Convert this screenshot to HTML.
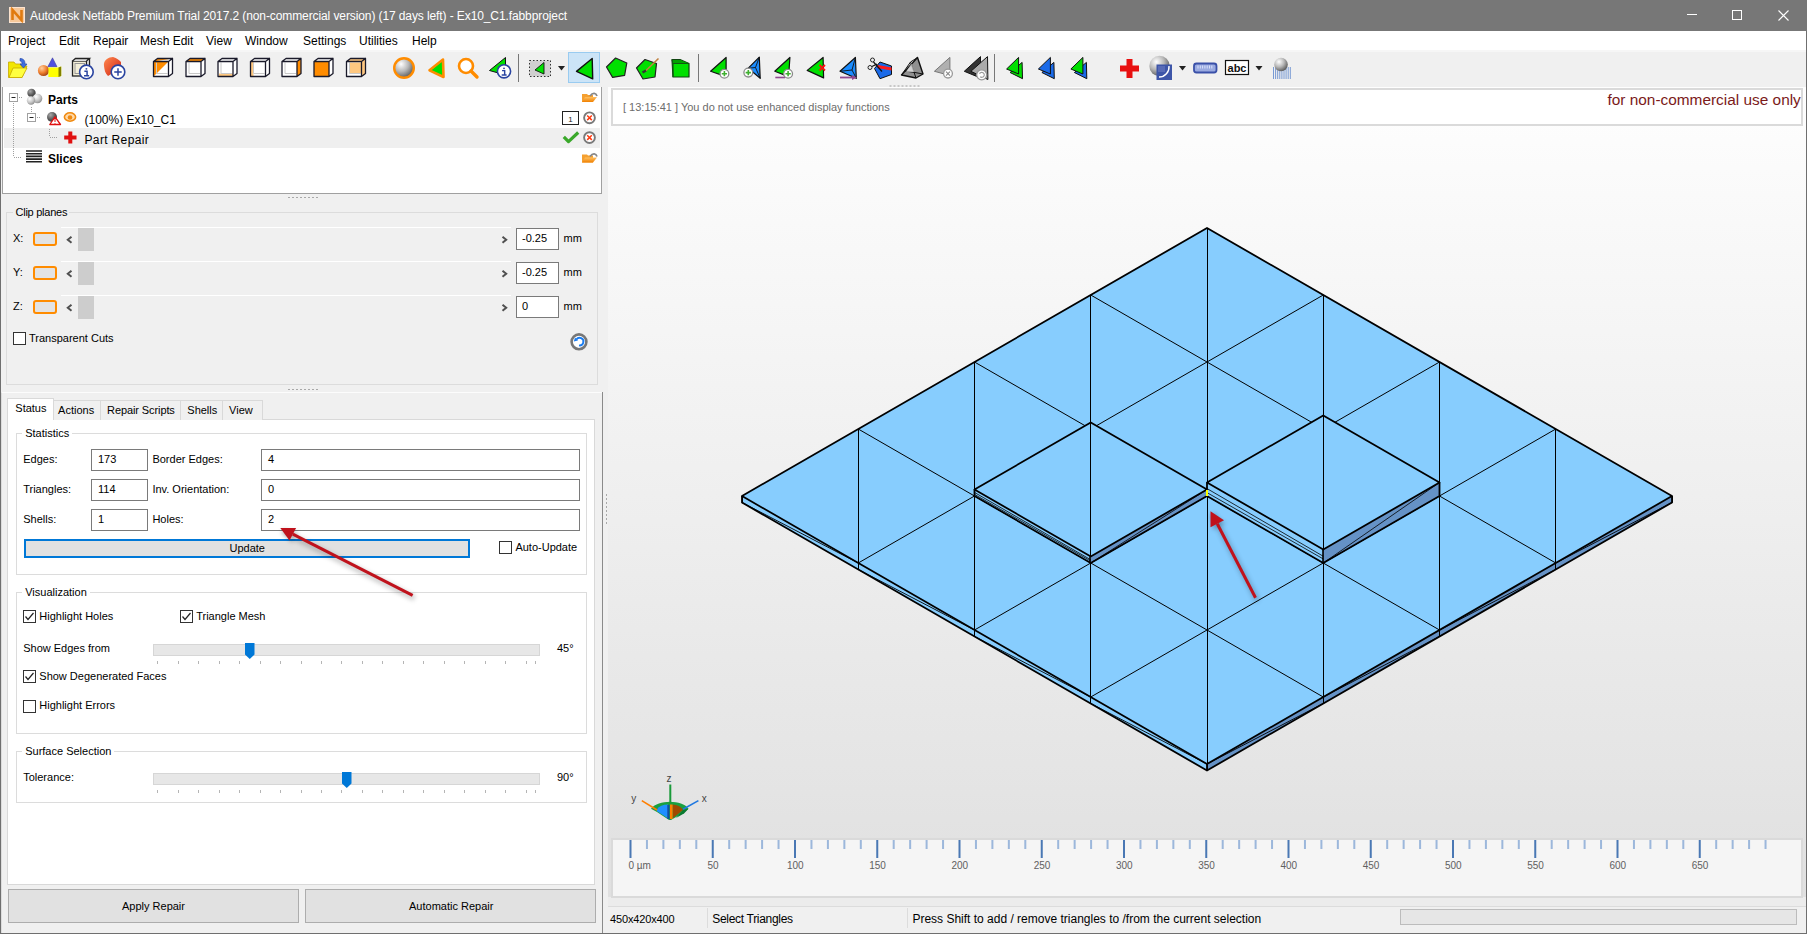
<!DOCTYPE html><html><head><meta charset="utf-8"><style>
html,body{margin:0;padding:0;}
body{width:1807px;height:934px;overflow:hidden;position:relative;background:#f0f0f0;font-family:"Liberation Sans",sans-serif;}
.t{position:absolute;white-space:pre;line-height:1;}
.b{position:absolute;box-sizing:border-box;}
svg{position:absolute;overflow:visible;}
</style></head><body>
<div class="b" style="left:0px;top:0px;width:1807px;height:31px;background:#777777;"></div>
<svg style="left:9px;top:7px" width="16" height="16"><rect x="0" y="0" width="16" height="16" fill="#fbe3cf"/><rect x="1" y="1" width="14" height="14" fill="#f6c89a"/><path d="M3.5 13 V3 L12.5 13 V3" fill="none" stroke="#e07b10" stroke-width="2.6"/></svg>
<div class="t" style="left:30px;top:10.00px;font-size:12px;color:#ffffff;font-weight:400;letter-spacing:-0.1px;">Autodesk Netfabb Premium Trial 2017.2 (non-commercial version) (17 days left) - Ex10_C1.fabbproject</div>
<div class="b" style="left:1687px;top:14px;width:10px;height:1px;background:#fff;"></div>
<div class="b" style="left:1732px;top:10px;width:10px;height:10px;border:1px solid #fff;"></div>
<svg style="left:1778px;top:10px" width="11" height="11"><path d="M0.5 0.5 L10.5 10.5 M10.5 0.5 L0.5 10.5" stroke="#fff" stroke-width="1.1"/></svg>
<div class="b" style="left:1px;top:31px;width:1805px;height:19px;background:#ffffff;"></div>
<div class="b" style="left:1px;top:50px;width:1805px;height:2px;background:#f6f6f6;"></div>
<div class="t" style="left:8px;top:35.00px;font-size:12px;color:#000;font-weight:400;">Project</div>
<div class="t" style="left:59px;top:35.00px;font-size:12px;color:#000;font-weight:400;">Edit</div>
<div class="t" style="left:93px;top:35.00px;font-size:12px;color:#000;font-weight:400;">Repair</div>
<div class="t" style="left:140px;top:35.00px;font-size:12px;color:#000;font-weight:400;">Mesh Edit</div>
<div class="t" style="left:206px;top:35.00px;font-size:12px;color:#000;font-weight:400;">View</div>
<div class="t" style="left:245px;top:35.00px;font-size:12px;color:#000;font-weight:400;">Window</div>
<div class="t" style="left:303px;top:35.00px;font-size:12px;color:#000;font-weight:400;">Settings</div>
<div class="t" style="left:359px;top:35.00px;font-size:12px;color:#000;font-weight:400;">Utilities</div>
<div class="t" style="left:412px;top:35.00px;font-size:12px;color:#000;font-weight:400;">Help</div>
<div class="b" style="left:1px;top:52px;width:1805px;height:35px;background:#f0f0f0;"></div>
<div class="b" style="left:0px;top:31px;width:1px;height:903px;background:#6f6f6f;"></div>
<div class="b" style="left:1806px;top:31px;width:1px;height:903px;background:#6f6f6f;"></div>
<div class="b" style="left:0px;top:933px;width:1807px;height:1px;background:#6f6f6f;"></div>
<svg style="left:0;top:0" width="1807" height="90" viewBox="0 0 1807 90"><defs>
<radialGradient id="gs" cx="0.35" cy="0.3" r="0.75"><stop offset="0" stop-color="#ffffff"/><stop offset="0.5" stop-color="#b8b8b8"/><stop offset="1" stop-color="#555"/></radialGradient>
<radialGradient id="go" cx="0.35" cy="0.3" r="0.75"><stop offset="0" stop-color="#ffd0a0"/><stop offset="0.55" stop-color="#f08030"/><stop offset="1" stop-color="#a04010"/></radialGradient>
<linearGradient id="gr" x1="0" y1="0" x2="1" y2="1"><stop offset="0" stop-color="#ff8a50"/><stop offset="1" stop-color="#d02010"/></linearGradient>
</defs><path d="M8.5 62 L14 62 L15.5 64 L21 64 L21 66 L27 66 L22 77.5 L8.5 77.5 Z" fill="#f2e600" stroke="#c8a800" stroke-width="0.8"/><path d="M9 77.5 L13 68 L27 68 L22 77.5 Z" fill="#ffff40" stroke="#c8a800" stroke-width="0.8"/><path d="M20 58.5 C24 58.5 25 61 25 64 L27 64 L23.5 68 L20 64 L22 64 C22 62 21.5 61 20 61 Z" fill="#3d6ee0" stroke="#2040a0" stroke-width="0.6"/><polygon points="52.5,57.8 47.8,66.7 57,66.7" fill="#5050e0" stroke="#303090" stroke-width="0.5"/><circle cx="43.5" cy="70.5" r="5.6" fill="url(#go)"/><polygon points="48.4,67.5 58.5,67.5 61.2,66.5 61.2,76 58.5,77.1 48.4,77.1" fill="#ffff00"/><polygon points="58.5,67.5 61.2,66.5 61.2,76 58.5,77.1" fill="#808000"/><rect x="72.5" y="61" width="14" height="15" fill="#f4efd8" stroke="#222" stroke-width="1.3"/><path d="M72.5 61 L75.5 58.5 L89.5 58.5 L86.5 61 M89.5 58.5 L89.5 73 L86.5 76" fill="#e0e0e0" stroke="#222" stroke-width="1.3"/><rect x="75" y="63.5" width="9.5" height="10" fill="none" stroke="#999" stroke-width="1"/><circle cx="86.4" cy="71.9" r="6.8" fill="#fff" stroke="#2a44a0" stroke-width="1.6"/><circle cx="86.4" cy="68.84" r="0.9520000000000001" fill="#2a44a0"/><path d="M84.36 71.22 H87.08000000000001 V75.30000000000001 M84.02000000000001 75.64 H89.12" stroke="#2a44a0" stroke-width="1.496" fill="none"/><path d="M104 66 C103 60 109 57 113 57 C117 58 119 60 121 62 L121 72 C116 70 111 74 108 76 C105 73 104.5 70 104 66 Z" fill="url(#gr)"/><circle cx="118" cy="71.9" r="6.8" fill="#fff" stroke="#2a44a0" stroke-width="1.6"/><path d="M114.26 71.9 H121.74 M118 68.16000000000001 V75.64" stroke="#2a44a0" stroke-width="1.496" fill="none"/><path d="M168.5 61.5 L172.5 58.5 L172.5 73.5 L168.5 76.5 Z" fill="#fff"/><path d="M153.5 61.5 L157.5 58.5 L172.5 58.5 L168.5 61.5 Z" fill="#fff"/><path d="M153.5 61.5 H168.5 V76.5 H153.5 Z" fill="#fff"/><path d="M153.5 61.5 L168.5 61.5 L153.5 76.5 Z" fill="#ff8c00"/><path d="M153.5 61.5 L157.5 58.5 L172.5 58.5 Z" fill="#ff8c00"/><path d="M156.5 73.5 H167.5 M156.5 62.5 V73.5" stroke="#c8c8c8" stroke-width="1" fill="none"/><path d="M153.5 61.5 H168.5 V76.5 H153.5 Z M153.5 61.5 L157.5 58.5 L172.5 58.5 L168.5 61.5 Z M168.5 61.5 L172.5 58.5 L172.5 73.5 L168.5 76.5 Z" fill="none" stroke="#1a1a2a" stroke-width="1.3" stroke-linejoin="round"/><path d="M201 61.5 L205 58.5 L205 73.5 L201 76.5 Z" fill="#fff"/><path d="M186 61.5 L190 58.5 L205 58.5 L201 61.5 Z" fill="#ff8c00"/><path d="M186 61.5 H201 V76.5 H186 Z" fill="#fff"/><path d="M189 73.5 H200 M189 62.5 V73.5" stroke="#c8c8c8" stroke-width="1" fill="none"/><path d="M186 61.5 H201 V76.5 H186 Z M186 61.5 L190 58.5 L205 58.5 L201 61.5 Z M201 61.5 L205 58.5 L205 73.5 L201 76.5 Z" fill="none" stroke="#1a1a2a" stroke-width="1.3" stroke-linejoin="round"/><path d="M233 61.5 L237 58.5 L237 73.5 L233 76.5 Z" fill="#fff"/><path d="M218 61.5 L222 58.5 L237 58.5 L233 61.5 Z" fill="#fff"/><path d="M218 61.5 H233 V76.5 H218 Z" fill="#fff"/><rect x="219" y="73.5" width="14" height="3" fill="#ffc880"/><path d="M221 73.5 H232 M221 62.5 V73.5" stroke="#c8c8c8" stroke-width="1" fill="none"/><path d="M218 61.5 H233 V76.5 H218 Z M218 61.5 L222 58.5 L237 58.5 L233 61.5 Z M233 61.5 L237 58.5 L237 73.5 L233 76.5 Z" fill="none" stroke="#1a1a2a" stroke-width="1.3" stroke-linejoin="round"/><path d="M265.5 61.5 L269.5 58.5 L269.5 73.5 L265.5 76.5 Z" fill="#fff"/><path d="M250.5 61.5 L254.5 58.5 L269.5 58.5 L265.5 61.5 Z" fill="#fff"/><path d="M250.5 61.5 H265.5 V76.5 H250.5 Z" fill="#fff"/><rect x="250.5" y="61.5" width="3" height="15" fill="#ffc880"/><path d="M253.5 73.5 H264.5 M253.5 62.5 V73.5" stroke="#c8c8c8" stroke-width="1" fill="none"/><path d="M250.5 61.5 H265.5 V76.5 H250.5 Z M250.5 61.5 L254.5 58.5 L269.5 58.5 L265.5 61.5 Z M265.5 61.5 L269.5 58.5 L269.5 73.5 L265.5 76.5 Z" fill="none" stroke="#1a1a2a" stroke-width="1.3" stroke-linejoin="round"/><path d="M297 61.5 L301 58.5 L301 73.5 L297 76.5 Z" fill="#ff8c00"/><path d="M282 61.5 L286 58.5 L301 58.5 L297 61.5 Z" fill="#fff"/><path d="M282 61.5 H297 V76.5 H282 Z" fill="#fff"/><path d="M285 73.5 H296 M285 62.5 V73.5" stroke="#c8c8c8" stroke-width="1" fill="none"/><path d="M282 61.5 H297 V76.5 H282 Z M282 61.5 L286 58.5 L301 58.5 L297 61.5 Z M297 61.5 L301 58.5 L301 73.5 L297 76.5 Z" fill="none" stroke="#1a1a2a" stroke-width="1.3" stroke-linejoin="round"/><path d="M329 61.5 L333 58.5 L333 73.5 L329 76.5 Z" fill="#fff"/><path d="M314 61.5 L318 58.5 L333 58.5 L329 61.5 Z" fill="#fff"/><path d="M314 61.5 H329 V76.5 H314 Z" fill="#ff8c00"/><path d="M314 61.5 H329 V76.5 H314 Z M314 61.5 L318 58.5 L333 58.5 L329 61.5 Z M329 61.5 L333 58.5 L333 73.5 L329 76.5 Z" fill="none" stroke="#1a1a2a" stroke-width="1.3" stroke-linejoin="round"/><path d="M361.5 61.5 L365.5 58.5 L365.5 73.5 L361.5 76.5 Z" fill="#ffc880"/><path d="M346.5 61.5 L350.5 58.5 L365.5 58.5 L361.5 61.5 Z" fill="#ffc880"/><path d="M346.5 61.5 H361.5 V76.5 H346.5 Z" fill="#fff"/><rect x="349.5" y="62.5" width="12" height="11" fill="#ffc880"/><path d="M349.5 73.5 H360.5 M349.5 62.5 V73.5" stroke="#c8c8c8" stroke-width="1" fill="none"/><path d="M346.5 61.5 H361.5 V76.5 H346.5 Z M346.5 61.5 L350.5 58.5 L365.5 58.5 L361.5 61.5 Z M361.5 61.5 L365.5 58.5 L365.5 73.5 L361.5 76.5 Z" fill="none" stroke="#1a1a2a" stroke-width="1.3" stroke-linejoin="round"/><circle cx="404" cy="68" r="9.8" fill="url(#gs)" stroke="#ff8c00" stroke-width="2.4"/><polygon points="443,59.5 429.5,70.3 443.5,77" fill="#00e000" stroke="#ff8c00" stroke-width="2.6" stroke-linejoin="round"/><circle cx="466" cy="66" r="7" fill="#fff" stroke="#ff8c00" stroke-width="2.6"/><path d="M471 71 L477 77" stroke="#ff8c00" stroke-width="3.4" stroke-linecap="round"/><polygon points="505.5,57.5 489.5,70.5 505.5,75" fill="#00e000" stroke="#111" stroke-width="1"/><circle cx="504" cy="71.3" r="6.6" fill="#fff" stroke="#2a44a0" stroke-width="1.6"/><circle cx="504" cy="68.33" r="0.924" fill="#2a44a0"/><path d="M502.02 70.64 H504.66 V74.6 M501.69 74.92999999999999 H506.64" stroke="#2a44a0" stroke-width="1.452" fill="none"/><rect x="518.0" y="54" width="1" height="28" fill="#777"/><rect x="698.0" y="54" width="1" height="28" fill="#777"/><rect x="994.0" y="54" width="1" height="28" fill="#777"/><rect x="529.5" y="60.5" width="21" height="16" fill="#d0d0d0" stroke="#333" stroke-width="1" stroke-dasharray="1.5,2"/><polygon points="535,70 544,62.5 544,74" fill="#00e000" stroke="#111" stroke-width="0.9"/><polygon points="558,66 565,66 561.5,70.5" fill="#222"/><rect x="568.5" y="52.5" width="31" height="30" fill="#cce4f7" stroke="#99cbf0" stroke-width="1"/><polygon points="576.5,71.4 592.2,58.5 592.7,78.9" fill="#00e000" stroke="#111" stroke-width="1.4" stroke-linejoin="round"/><polygon points="615.6,58 626.8,63 624.6,75.4 612.6,77.4 606.5,67" fill="#00e000" stroke="#222" stroke-width="1.2" stroke-linejoin="round"/><polygon points="645,59.5 656.5,63.5 655,77 643,79 636.5,68" fill="#00e000" stroke="#222" stroke-width="1.2" stroke-linejoin="round"/><path d="M658.5 58.5 L645.5 71" stroke="#c08040" stroke-width="1.6"/><path d="M646 70.5 L642.5 72.5" stroke="#333" stroke-width="2.4"/><path d="M672 59.5 L680 59.5 L689 63.5 L689 77 L673 77 Z" fill="#00e000" stroke="#114411" stroke-width="1.2" stroke-linejoin="round"/><path d="M672 59.5 L673 63.5 L689 63.5 M673 63.5 L673 77" fill="none" stroke="#115511" stroke-width="1.2"/><path d="M673 60 L680 60 L688 63 L673 63 Z" fill="#00a000"/><polygon points="710.6,71.3 726.1,57.5 726.1,76.6" fill="#00e000" stroke="#111" stroke-width="1.2" stroke-linejoin="round"/><circle cx="724.4" cy="73.7" r="4.4" fill="#fff" stroke="#8a8a8a" stroke-width="1.3"/><path d="M721.76 73.7 H727.04 M724.4 71.06 V76.34" stroke="#40b030" stroke-width="1.6"/><polygon points="748.3,68.2 759.3,57.1 760.2,78.3" fill="#1a8cff" stroke="#111" stroke-width="1.2" stroke-linejoin="round"/><path d="M755.5 67.5 L759.3 57.1 M755.5 67.5 L760.2 78.3 M755.5 67.5 L748.3 68.2" stroke="#111" stroke-width="0.9"/><circle cx="748.3" cy="72.6" r="4.4" fill="#fff" stroke="#8a8a8a" stroke-width="1.3"/><path d="M745.66 72.6 H750.9399999999999 M748.3 69.96 V75.24" stroke="#40b030" stroke-width="1.6"/><polygon points="774.8,71.3 789.9,57.5 788.6,76.6" fill="#00e000" stroke="#111" stroke-width="1.2" stroke-linejoin="round"/><path d="M775.3 77.5 H785" stroke="#904890" stroke-width="1.6"/><circle cx="788.1" cy="73.7" r="4.4" fill="#fff" stroke="#8a8a8a" stroke-width="1.3"/><path d="M785.46 73.7 H790.74 M788.1 71.06 V76.34" stroke="#40b030" stroke-width="1.6"/><polygon points="807.2,70.4 823.1,57.5 823.6,77.9" fill="#00e000" stroke="#111" stroke-width="1.2" stroke-linejoin="round"/><path d="M819.5 65 L825 70.5 M825 65 L819.5 70.5" stroke="#ff1010" stroke-width="1.8"/><polygon points="840,71.3 855.4,57.5 856.3,78.3" fill="#1a8cff" stroke="#111" stroke-width="1.2" stroke-linejoin="round"/><path d="M852 70 L855.4 57.5 M852 70 L856.3 78.3 M852 70 L840 71.3" stroke="#111" stroke-width="0.9"/><path d="M840 77.5 H853" stroke="#904890" stroke-width="1.8"/><polygon points="852,75 857,77.5 852,80" fill="#904890"/><polygon points="880,62 891.5,66 891.5,74.5 880,78.7 874.5,68.5" fill="#1a6ae8" stroke="#111" stroke-width="1"/><polygon points="878,65 891.5,67.5 891.5,70.5 877,68" fill="#ff1a1a"/><circle cx="872.5" cy="60" r="2" fill="none" stroke="#111" stroke-width="0.9"/><circle cx="870" cy="67.5" r="2" fill="none" stroke="#111" stroke-width="0.9"/><path d="M873.5 62 L882 71.5 M872 66.5 L877 64" stroke="#111" stroke-width="1.2"/><polygon points="917.5,57.5 901.5,75 916,78 923,74" fill="#909090" stroke="#111" stroke-width="1.4" stroke-linejoin="round"/><path d="M917.5 57.5 L910.5 62 L901.5 75 M910.5 62 L916 78 M905 71 L915 72.5 L923 74" fill="none" stroke="#111" stroke-width="1"/><polygon points="911.5,63.5 914.5,72 906,72" fill="#fff" opacity="0.6"/><polygon points="934.4,71.3 949.9,57.4 949.9,75.5" fill="#b0b0b0" stroke="#777" stroke-width="1"/><circle cx="948" cy="73.6" r="4.4" fill="#fff" stroke="#999" stroke-width="1.3"/><path d="M946.02 71.61999999999999 L949.98 75.58 M949.98 71.61999999999999 L946.02 75.58" stroke="#888" stroke-width="1.1"/><polygon points="964.3,71.3 980.5,56.6 980.5,78" fill="#333" stroke="#111" stroke-width="1"/><polygon points="970.9,71.3 987.5,56.6 987.9,79.5" fill="#aaa" stroke="#111" stroke-width="1"/><circle cx="981.7" cy="74.8" r="5" fill="#fff" stroke="#999" stroke-width="1.3"/><path d="M979.5 73.8 A2.5 2.5 0 1 1 980.2 76.8" stroke="#999" stroke-width="1.1" fill="none"/><polygon points="1010.1,72.5 1022.1,62.4 1022.5,78.7" fill="#00e000" stroke="#111" stroke-width="1" stroke-linejoin="round"/><polygon points="1006.6,69 1018.6,57.4 1018.6,74" fill="#00e000" stroke="#111" stroke-width="1" stroke-linejoin="round"/><polygon points="1041.9,72.5 1053.9,62.4 1054.3000000000002,78.7" fill="#1a6ae8" stroke="#111" stroke-width="1" stroke-linejoin="round"/><polygon points="1038.4,69 1050.4,57.4 1050.4,74" fill="#1a6ae8" stroke="#111" stroke-width="1" stroke-linejoin="round"/><polygon points="1074.4,72.5 1086.4,62.4 1086.8000000000002,78.7" fill="#1a6ae8" stroke="#111" stroke-width="1" stroke-linejoin="round"/><polygon points="1070.9,69 1082.9,57.4 1082.9,74" fill="#00e000" stroke="#111" stroke-width="1" stroke-linejoin="round"/><path d="M1126.5 59 H1132.5 V65.5 H1139 V71.5 H1132.5 V78 H1126.5 V71.5 H1120 V65.5 H1126.5 Z" fill="#e81010"/><circle cx="1159.5" cy="66" r="10.2" fill="url(#gs)"/><rect x="1156.5" y="64.5" width="15.5" height="15.5" fill="#3d55a8"/><path d="M1169 66 A10 10 0 0 1 1159 77" stroke="#fff" stroke-width="1.4" fill="none"/><rect x="1158" y="66" width="7" height="6" fill="#6a7ac0" opacity="0.6"/><polygon points="1179,66 1186,66 1182.5,70.5" fill="#222"/><rect x="1194" y="63.5" width="22.5" height="9" rx="2.5" fill="#9aaae0" stroke="#3a50a8" stroke-width="1.8"/><path d="M1198.0 65.5 V68.5 M1200.3 65.5 V68.5 M1202.6 65.5 V68.5 M1204.9 65.5 V68.5 M1207.2 65.5 V68.5 M1209.5 65.5 V68.5 M1211.8 65.5 V68.5 " stroke="#e0e8ff" stroke-width="0.9"/><rect x="1225.5" y="60.5" width="23" height="14" fill="#fff" stroke="#111" stroke-width="1.2"/><text x="1237" y="72" text-anchor="middle" font-family="Liberation Sans" font-weight="700" font-size="11" fill="#111">abc</text><polygon points="1255.5,66 1262.5,66 1259.0,70.5" fill="#222"/><path d="M1273.5 67 V79 M1275.6 67 V79 M1277.7 67 V79 M1279.8 67 V79 M1281.9 67 V79 M1284.0 67 V79 M1286.1 67 V79 M1288.2 67 V79 M1290.3 67 V79 " stroke="#6a90d0" stroke-width="0.9"/><circle cx="1281" cy="64.5" r="6.8" fill="url(#gs)"/><path d="M889.5 86 h2 M893.5 86 h2 M897.5 86 h2 M901.5 86 h2 M905.5 86 h2 M909.5 86 h2 M913.5 86 h2 M917.5 86 h2 " stroke="#a0a0a0" stroke-width="1"/></svg>
<div class="b" style="left:1px;top:87px;width:606px;height:846px;background:#f0f0f0;"></div>
<div class="b" style="left:2px;top:87px;width:600px;height:107px;background:#fff;border:1px solid #a0a0a0;border-top:none;"></div>
<div class="b" style="left:4px;top:128px;width:596px;height:20px;background:#efefef;"></div>
<div class="t" style="left:48px;top:94.00px;font-size:12px;color:#000;font-weight:700;">Parts</div>
<div class="t" style="left:84.5px;top:114.00px;font-size:12px;color:#000;font-weight:400;">(100%) Ex10_C1</div>
<div class="t" style="left:84.5px;top:134.00px;font-size:12px;color:#000;font-weight:400;letter-spacing:0.35px;">Part Repair</div>
<div class="t" style="left:48px;top:153.00px;font-size:12px;color:#000;font-weight:700;">Slices</div>
<div class="b" style="left:6px;top:212px;width:592px;height:173px;border:1px solid #dcdcdc;"></div>
<div class="b" style="left:13px;top:205px;width:56px;height:12px;background:#f0f0f0;"></div>
<div class="t" style="left:15.5px;top:207.00px;font-size:11px;color:#000;font-weight:400;letter-spacing:-0.25px;">Clip planes</div>
<div class="t" style="left:13px;top:233.00px;font-size:11px;color:#000;font-weight:400;">X:</div>
<div class="b" style="left:33px;top:232px;width:24px;height:14px;border:2px solid #ff8c00;border-radius:3px;background:#e3e3e3;"></div>
<div class="b" style="left:61px;top:227px;width:450px;height:1px;background:#ffffff;"></div>
<div class="b" style="left:78px;top:228px;width:16px;height:23px;background:#cdcdcd;"></div>
<svg style="left:66px;top:236px" width="7" height="8"><path d="M5.5 0.8 L1.8 3.8 L5.5 6.8" fill="none" stroke="#505050" stroke-width="2"/></svg>
<svg style="left:501px;top:236px" width="7" height="8"><path d="M1.5 0.8 L5.2 3.8 L1.5 6.8" fill="none" stroke="#505050" stroke-width="2"/></svg>
<div class="b" style="left:516px;top:228px;width:43px;height:22px;background:#fff;border:1px solid #7a7a7a;"></div>
<div class="t" style="left:522px;top:233.00px;font-size:11px;color:#000;font-weight:400;">-0.25</div>
<div class="t" style="left:563.5px;top:233.00px;font-size:11px;color:#000;font-weight:400;">mm</div>
<div class="t" style="left:13px;top:267.00px;font-size:11px;color:#000;font-weight:400;">Y:</div>
<div class="b" style="left:33px;top:266px;width:24px;height:14px;border:2px solid #ff8c00;border-radius:3px;background:#e3e3e3;"></div>
<div class="b" style="left:61px;top:261px;width:450px;height:1px;background:#ffffff;"></div>
<div class="b" style="left:78px;top:262px;width:16px;height:23px;background:#cdcdcd;"></div>
<svg style="left:66px;top:270px" width="7" height="8"><path d="M5.5 0.8 L1.8 3.8 L5.5 6.8" fill="none" stroke="#505050" stroke-width="2"/></svg>
<svg style="left:501px;top:270px" width="7" height="8"><path d="M1.5 0.8 L5.2 3.8 L1.5 6.8" fill="none" stroke="#505050" stroke-width="2"/></svg>
<div class="b" style="left:516px;top:262px;width:43px;height:22px;background:#fff;border:1px solid #7a7a7a;"></div>
<div class="t" style="left:522px;top:267.00px;font-size:11px;color:#000;font-weight:400;">-0.25</div>
<div class="t" style="left:563.5px;top:267.00px;font-size:11px;color:#000;font-weight:400;">mm</div>
<div class="t" style="left:13px;top:301.00px;font-size:11px;color:#000;font-weight:400;">Z:</div>
<div class="b" style="left:33px;top:300px;width:24px;height:14px;border:2px solid #ff8c00;border-radius:3px;background:#e3e3e3;"></div>
<div class="b" style="left:61px;top:295px;width:450px;height:1px;background:#ffffff;"></div>
<div class="b" style="left:78px;top:296px;width:16px;height:23px;background:#cdcdcd;"></div>
<svg style="left:66px;top:304px" width="7" height="8"><path d="M5.5 0.8 L1.8 3.8 L5.5 6.8" fill="none" stroke="#505050" stroke-width="2"/></svg>
<svg style="left:501px;top:304px" width="7" height="8"><path d="M1.5 0.8 L5.2 3.8 L1.5 6.8" fill="none" stroke="#505050" stroke-width="2"/></svg>
<div class="b" style="left:516px;top:296px;width:43px;height:22px;background:#fff;border:1px solid #7a7a7a;"></div>
<div class="t" style="left:522px;top:301.00px;font-size:11px;color:#000;font-weight:400;">0</div>
<div class="t" style="left:563.5px;top:301.00px;font-size:11px;color:#000;font-weight:400;">mm</div>
<div class="b" style="left:13px;top:332px;width:13px;height:13px;background:#fff;border:1px solid #333;"></div>
<div class="t" style="left:29px;top:333.00px;font-size:11px;color:#000;font-weight:400;">Transparent Cuts</div>
<svg style="left:570px;top:333px" width="18" height="18"><circle cx="9" cy="8.8" r="7.4" fill="#fff" stroke="#777" stroke-width="2.6"/><path d="M6.4 6.6 A3.8 3.8 0 1 1 9 12.4" fill="none" stroke="#1a7cf0" stroke-width="1.9"/><path d="M3.8 8.6 L5 4.6 L8 7.6 Z" fill="#1a7cf0"/></svg>
<div class="b" style="left:288px;top:197px;width:2px;height:1px;background:#a8a8a8;"></div>
<div class="b" style="left:292px;top:197px;width:2px;height:1px;background:#a8a8a8;"></div>
<div class="b" style="left:296px;top:197px;width:2px;height:1px;background:#a8a8a8;"></div>
<div class="b" style="left:300px;top:197px;width:2px;height:1px;background:#a8a8a8;"></div>
<div class="b" style="left:304px;top:197px;width:2px;height:1px;background:#a8a8a8;"></div>
<div class="b" style="left:308px;top:197px;width:2px;height:1px;background:#a8a8a8;"></div>
<div class="b" style="left:312px;top:197px;width:2px;height:1px;background:#a8a8a8;"></div>
<div class="b" style="left:316px;top:197px;width:2px;height:1px;background:#a8a8a8;"></div>
<div class="b" style="left:288px;top:389px;width:2px;height:1px;background:#a8a8a8;"></div>
<div class="b" style="left:292px;top:389px;width:2px;height:1px;background:#a8a8a8;"></div>
<div class="b" style="left:296px;top:389px;width:2px;height:1px;background:#a8a8a8;"></div>
<div class="b" style="left:300px;top:389px;width:2px;height:1px;background:#a8a8a8;"></div>
<div class="b" style="left:304px;top:389px;width:2px;height:1px;background:#a8a8a8;"></div>
<div class="b" style="left:308px;top:389px;width:2px;height:1px;background:#a8a8a8;"></div>
<div class="b" style="left:312px;top:389px;width:2px;height:1px;background:#a8a8a8;"></div>
<div class="b" style="left:316px;top:389px;width:2px;height:1px;background:#a8a8a8;"></div>
<div class="b" style="left:1px;top:392px;width:602px;height:541px;border-left:1px solid #dcdcdc;border-top:1px solid #fcfcfc;"></div>
<div class="b" style="left:7px;top:419px;width:588px;height:466px;background:#fff;border:1px solid #d9d9d9;"></div>
<div class="b" style="left:53px;top:400px;width:48px;height:20px;background:#f0f0f0;border:1px solid #d9d9d9;border-bottom:none;"></div>
<div class="b" style="left:100px;top:400px;width:81px;height:20px;background:#f0f0f0;border:1px solid #d9d9d9;border-bottom:none;"></div>
<div class="b" style="left:180px;top:400px;width:43px;height:20px;background:#f0f0f0;border:1px solid #d9d9d9;border-bottom:none;"></div>
<div class="b" style="left:222px;top:400px;width:41px;height:20px;background:#f0f0f0;border:1px solid #d9d9d9;border-bottom:none;"></div>
<div class="b" style="left:7px;top:398px;width:47px;height:22px;background:#fff;border:1px solid #d9d9d9;border-bottom:none;"></div>
<div class="t" style="left:15.3px;top:403.00px;font-size:11px;color:#000;font-weight:400;">Status</div>
<div class="t" style="left:58.1px;top:405.00px;font-size:11px;color:#000;font-weight:400;">Actions</div>
<div class="t" style="left:107.1px;top:405.00px;font-size:11px;color:#000;font-weight:400;letter-spacing:-0.1px;">Repair Scripts</div>
<div class="t" style="left:187.3px;top:405.00px;font-size:11px;color:#000;font-weight:400;">Shells</div>
<div class="t" style="left:229.1px;top:405.00px;font-size:11px;color:#000;font-weight:400;">View</div>
<div class="b" style="left:16px;top:433px;width:571px;height:142px;border:1px solid #dcdcdc;"></div>
<div class="b" style="left:22.2px;top:427px;width:50px;height:12px;background:#fff;"></div>
<div class="t" style="left:25.2px;top:428.00px;font-size:11px;color:#000;font-weight:400;">Statistics</div>
<div class="t" style="left:23.2px;top:454.00px;font-size:11px;color:#000;font-weight:400;">Edges:</div>
<div class="b" style="left:91px;top:449px;width:57px;height:22px;background:#fff;border:1px solid #7a7a7a;"></div>
<div class="t" style="left:98px;top:454.00px;font-size:11px;color:#000;font-weight:400;">173</div>
<div class="t" style="left:152.4px;top:454.00px;font-size:11px;color:#000;font-weight:400;">Border Edges:</div>
<div class="b" style="left:261px;top:449px;width:319px;height:22px;background:#fff;border:1px solid #7a7a7a;"></div>
<div class="t" style="left:268px;top:454.00px;font-size:11px;color:#000;font-weight:400;">4</div>
<div class="t" style="left:23.2px;top:484.00px;font-size:11px;color:#000;font-weight:400;">Triangles:</div>
<div class="b" style="left:91px;top:479px;width:57px;height:22px;background:#fff;border:1px solid #7a7a7a;"></div>
<div class="t" style="left:98px;top:484.00px;font-size:11px;color:#000;font-weight:400;">114</div>
<div class="t" style="left:152.4px;top:484.00px;font-size:11px;color:#000;font-weight:400;">Inv. Orientation:</div>
<div class="b" style="left:261px;top:479px;width:319px;height:22px;background:#fff;border:1px solid #7a7a7a;"></div>
<div class="t" style="left:268px;top:484.00px;font-size:11px;color:#000;font-weight:400;">0</div>
<div class="t" style="left:23.2px;top:514.00px;font-size:11px;color:#000;font-weight:400;">Shells:</div>
<div class="b" style="left:91px;top:509px;width:57px;height:22px;background:#fff;border:1px solid #7a7a7a;"></div>
<div class="t" style="left:98px;top:514.00px;font-size:11px;color:#000;font-weight:400;">1</div>
<div class="t" style="left:152.4px;top:514.00px;font-size:11px;color:#000;font-weight:400;">Holes:</div>
<div class="b" style="left:261px;top:509px;width:319px;height:22px;background:#fff;border:1px solid #7a7a7a;"></div>
<div class="t" style="left:268px;top:514.00px;font-size:11px;color:#000;font-weight:400;">2</div>
<div class="b" style="left:24px;top:539px;width:446px;height:19px;background:#e1e1e1;border:2px solid #0078d7;"></div>
<div class="t" style="left:229.5px;top:543.00px;font-size:11px;color:#000;font-weight:400;">Update</div>
<div class="b" style="left:499px;top:541px;width:13px;height:13px;background:#fff;border:1px solid #333;"></div>
<div class="t" style="left:515.4px;top:542.00px;font-size:11px;color:#000;font-weight:400;">Auto-Update</div>
<div class="b" style="left:16px;top:592px;width:571px;height:142px;border:1px solid #dcdcdc;"></div>
<div class="b" style="left:22.2px;top:586px;width:67.6px;height:12px;background:#fff;"></div>
<div class="t" style="left:25.2px;top:587.00px;font-size:11px;color:#000;font-weight:400;">Visualization</div>
<div class="b" style="left:23px;top:610px;width:13px;height:13px;background:#fff;border:1px solid #333;"></div>
<svg style="left:23px;top:610px" width="13" height="13"><path d="M2.5 6.5 L5 9.5 L10.5 3" fill="none" stroke="#222" stroke-width="1.2"/></svg>
<div class="t" style="left:39.3px;top:611.00px;font-size:11px;color:#000;font-weight:400;">Highlight Holes</div>
<div class="b" style="left:180px;top:610px;width:13px;height:13px;background:#fff;border:1px solid #333;"></div>
<svg style="left:180px;top:610px" width="13" height="13"><path d="M2.5 6.5 L5 9.5 L10.5 3" fill="none" stroke="#222" stroke-width="1.2"/></svg>
<div class="t" style="left:196.2px;top:611.00px;font-size:11px;color:#000;font-weight:400;">Triangle Mesh</div>
<div class="t" style="left:23.2px;top:643.00px;font-size:11px;color:#000;font-weight:400;">Show Edges from</div>
<div class="b" style="left:153px;top:644px;width:387px;height:12px;background:#e7e7e7;border:1px solid #d6d6d6;"></div>
<svg style="left:245px;top:643px" width="10" height="17"><path d="M0 0 H9.5 V11.5 L4.75 16 L0 11.5 Z" fill="#0078d7"/></svg>
<div class="b" style="left:157px;top:661px;width:1px;height:3px;background:#b5b5b5;"></div>
<div class="b" style="left:178px;top:661px;width:1px;height:3px;background:#b5b5b5;"></div>
<div class="b" style="left:198px;top:661px;width:1px;height:3px;background:#b5b5b5;"></div>
<div class="b" style="left:219px;top:661px;width:1px;height:3px;background:#b5b5b5;"></div>
<div class="b" style="left:239px;top:661px;width:1px;height:3px;background:#b5b5b5;"></div>
<div class="b" style="left:260px;top:661px;width:1px;height:3px;background:#b5b5b5;"></div>
<div class="b" style="left:280px;top:661px;width:1px;height:3px;background:#b5b5b5;"></div>
<div class="b" style="left:301px;top:661px;width:1px;height:3px;background:#b5b5b5;"></div>
<div class="b" style="left:321px;top:661px;width:1px;height:3px;background:#b5b5b5;"></div>
<div class="b" style="left:341px;top:661px;width:1px;height:3px;background:#b5b5b5;"></div>
<div class="b" style="left:362px;top:661px;width:1px;height:3px;background:#b5b5b5;"></div>
<div class="b" style="left:382px;top:661px;width:1px;height:3px;background:#b5b5b5;"></div>
<div class="b" style="left:403px;top:661px;width:1px;height:3px;background:#b5b5b5;"></div>
<div class="b" style="left:423px;top:661px;width:1px;height:3px;background:#b5b5b5;"></div>
<div class="b" style="left:444px;top:661px;width:1px;height:3px;background:#b5b5b5;"></div>
<div class="b" style="left:464px;top:661px;width:1px;height:3px;background:#b5b5b5;"></div>
<div class="b" style="left:485px;top:661px;width:1px;height:3px;background:#b5b5b5;"></div>
<div class="b" style="left:505px;top:661px;width:1px;height:3px;background:#b5b5b5;"></div>
<div class="b" style="left:526px;top:661px;width:1px;height:3px;background:#b5b5b5;"></div>
<div class="b" style="left:535px;top:661px;width:1px;height:3px;background:#b5b5b5;"></div>
<div class="t" style="left:557px;top:643.00px;font-size:11px;color:#000;font-weight:400;">45°</div>
<div class="b" style="left:23px;top:670px;width:13px;height:13px;background:#fff;border:1px solid #333;"></div>
<svg style="left:23px;top:670px" width="13" height="13"><path d="M2.5 6.5 L5 9.5 L10.5 3" fill="none" stroke="#222" stroke-width="1.2"/></svg>
<div class="t" style="left:39.3px;top:671.00px;font-size:11px;color:#000;font-weight:400;">Show Degenerated Faces</div>
<div class="b" style="left:23px;top:700px;width:13px;height:13px;background:#fff;border:1px solid #333;"></div>
<div class="t" style="left:39.3px;top:700.00px;font-size:11px;color:#000;font-weight:400;">Highlight Errors</div>
<div class="b" style="left:16px;top:751px;width:571px;height:52px;border:1px solid #dcdcdc;"></div>
<div class="b" style="left:22.2px;top:745px;width:92.2px;height:12px;background:#fff;"></div>
<div class="t" style="left:25.2px;top:746.00px;font-size:11px;color:#000;font-weight:400;">Surface Selection</div>
<div class="t" style="left:23.2px;top:772.00px;font-size:11px;color:#000;font-weight:400;">Tolerance:</div>
<div class="b" style="left:153px;top:773px;width:387px;height:12px;background:#e7e7e7;border:1px solid #d6d6d6;"></div>
<svg style="left:342px;top:772px" width="10" height="17"><path d="M0 0 H9.5 V11.5 L4.75 16 L0 11.5 Z" fill="#0078d7"/></svg>
<div class="b" style="left:157px;top:790px;width:1px;height:3px;background:#b5b5b5;"></div>
<div class="b" style="left:178px;top:790px;width:1px;height:3px;background:#b5b5b5;"></div>
<div class="b" style="left:198px;top:790px;width:1px;height:3px;background:#b5b5b5;"></div>
<div class="b" style="left:219px;top:790px;width:1px;height:3px;background:#b5b5b5;"></div>
<div class="b" style="left:239px;top:790px;width:1px;height:3px;background:#b5b5b5;"></div>
<div class="b" style="left:260px;top:790px;width:1px;height:3px;background:#b5b5b5;"></div>
<div class="b" style="left:280px;top:790px;width:1px;height:3px;background:#b5b5b5;"></div>
<div class="b" style="left:301px;top:790px;width:1px;height:3px;background:#b5b5b5;"></div>
<div class="b" style="left:321px;top:790px;width:1px;height:3px;background:#b5b5b5;"></div>
<div class="b" style="left:341px;top:790px;width:1px;height:3px;background:#b5b5b5;"></div>
<div class="b" style="left:362px;top:790px;width:1px;height:3px;background:#b5b5b5;"></div>
<div class="b" style="left:382px;top:790px;width:1px;height:3px;background:#b5b5b5;"></div>
<div class="b" style="left:403px;top:790px;width:1px;height:3px;background:#b5b5b5;"></div>
<div class="b" style="left:423px;top:790px;width:1px;height:3px;background:#b5b5b5;"></div>
<div class="b" style="left:444px;top:790px;width:1px;height:3px;background:#b5b5b5;"></div>
<div class="b" style="left:464px;top:790px;width:1px;height:3px;background:#b5b5b5;"></div>
<div class="b" style="left:485px;top:790px;width:1px;height:3px;background:#b5b5b5;"></div>
<div class="b" style="left:505px;top:790px;width:1px;height:3px;background:#b5b5b5;"></div>
<div class="b" style="left:526px;top:790px;width:1px;height:3px;background:#b5b5b5;"></div>
<div class="b" style="left:535px;top:790px;width:1px;height:3px;background:#b5b5b5;"></div>
<div class="t" style="left:557px;top:772.00px;font-size:11px;color:#000;font-weight:400;">90°</div>
<div class="b" style="left:8px;top:889px;width:291px;height:34px;background:#e1e1e1;border:1px solid #adadad;"></div>
<div class="t" style="left:122px;top:901.00px;font-size:11px;color:#000;font-weight:400;">Apply Repair</div>
<div class="b" style="left:305px;top:889px;width:291px;height:34px;background:#e1e1e1;border:1px solid #adadad;"></div>
<div class="t" style="left:409px;top:901.00px;font-size:11px;color:#000;font-weight:400;">Automatic Repair</div>
<div class="b" style="left:602px;top:392px;width:1px;height:541px;background:#8a8a8a;"></div>
<div class="b" style="left:606px;top:494px;width:1px;height:2px;background:#a8a8a8;"></div>
<div class="b" style="left:606px;top:498px;width:1px;height:2px;background:#a8a8a8;"></div>
<div class="b" style="left:606px;top:502px;width:1px;height:2px;background:#a8a8a8;"></div>
<div class="b" style="left:606px;top:506px;width:1px;height:2px;background:#a8a8a8;"></div>
<div class="b" style="left:606px;top:510px;width:1px;height:2px;background:#a8a8a8;"></div>
<div class="b" style="left:606px;top:514px;width:1px;height:2px;background:#a8a8a8;"></div>
<div class="b" style="left:606px;top:518px;width:1px;height:2px;background:#a8a8a8;"></div>
<div class="b" style="left:606px;top:522px;width:1px;height:2px;background:#a8a8a8;"></div>
<svg style="left:0;top:0" width="610" height="170" viewBox="0 0 610 170"><defs>
<radialGradient id="tg1" cx="0.35" cy="0.3" r="0.8"><stop offset="0" stop-color="#fff"/><stop offset="0.6" stop-color="#c0c0c0"/><stop offset="1" stop-color="#808080"/></radialGradient>
<radialGradient id="tg2" cx="0.35" cy="0.3" r="0.8"><stop offset="0" stop-color="#aaa"/><stop offset="0.6" stop-color="#555"/><stop offset="1" stop-color="#333"/></radialGradient>
<linearGradient id="fold" x1="0" y1="0" x2="0" y2="1"><stop offset="0" stop-color="#ffc060"/><stop offset="1" stop-color="#f08000"/></linearGradient>
</defs><path d="M13.5 103 V157 M14 157.5 H22 M19 97.5 H23 M31.5 107 V113 M37 117.5 H41 M49.5 129 V137 M50 137.5 H58" fill="none" stroke="#a0a0a0" stroke-width="1" stroke-dasharray="1,1"/><rect x="9.5" y="93.5" width="8" height="8" fill="#fff" stroke="#a0a0a0" stroke-width="1"/><path d="M11.5 97.5 H15.5" stroke="#222" stroke-width="1"/><rect x="27.5" y="113.5" width="8" height="8" fill="#fff" stroke="#a0a0a0" stroke-width="1"/><path d="M29.5 117.5 H33.5" stroke="#222" stroke-width="1"/><circle cx="31.5" cy="93" r="4.2" fill="url(#tg2)"/><circle cx="37.5" cy="98.5" r="4.8" fill="url(#tg1)"/><circle cx="31" cy="100.5" r="4.2" fill="url(#tg1)"/><circle cx="52" cy="117" r="5" fill="url(#tg2)"/><polygon points="55,116.8 60.5,124.5 49.8,124.5" fill="#fff" stroke="#e01010" stroke-width="1.3" stroke-linejoin="round"/><path d="M55 119 V122 M55 123 V123.8" stroke="#e01010" stroke-width="1"/><ellipse cx="70" cy="117" rx="5.6" ry="4.2" fill="#ffd9a8" stroke="#f08a10" stroke-width="1.6"/><circle cx="70" cy="117.5" r="2.3" fill="#f08a10"/><path d="M68.3 131.5 H72.3 V135.5 H76.5 V139.5 H72.3 V143.5 H68.3 V139.5 H64.2 V135.5 H68.3 Z" fill="#e01010"/><path d="M26 151.0 H42 M26 153.7 H42 M26 156.4 H42 M26 159.1 H42 M26 161.8 H42 " stroke="#222" stroke-width="1.6"/><path d="M582 94 H587 L588 95 H593 V102 H582 Z" fill="#f5a030"/><path d="M582 102 L585 97 H597 L593 102 Z" fill="url(#fold)"/><path d="M590 96 C593 92 596 93 597 96" stroke="#888" stroke-width="1.8" fill="none"/><path d="M582 154.5 H587 L588 155.5 H593 V162.5 H582 Z" fill="#f5a030"/><path d="M582 162.5 L585 157.5 H597 L593 162.5 Z" fill="url(#fold)"/><path d="M590 156.5 C593 152.5 596 153.5 597 156.5" stroke="#888" stroke-width="1.8" fill="none"/><rect x="562.5" y="111.5" width="16" height="13" fill="#fff" stroke="#222" stroke-width="1"/><text x="570.5" y="121.5" text-anchor="middle" font-family="Liberation Sans" font-size="8" fill="#222">1</text><circle cx="589.5" cy="117.8" r="5.4" fill="#fff" stroke="#7a7a7a" stroke-width="1.9"/><path d="M587.2 115.5 L591.8 120.1 M591.8 115.5 L587.2 120.1" stroke="#ff3a10" stroke-width="1.5"/><circle cx="589.5" cy="137.6" r="5.4" fill="#fff" stroke="#7a7a7a" stroke-width="1.9"/><path d="M587.2 135.29999999999998 L591.8 139.9 M591.8 135.29999999999998 L587.2 139.9" stroke="#ff3a10" stroke-width="1.5"/><path d="M563.8 136.8 L568.5 141.6 L578.2 132.5" fill="none" stroke="#3aa82a" stroke-width="3.2" stroke-linejoin="round"/></svg>
<div class="b" style="left:608px;top:87px;width:1198px;height:813px;background:linear-gradient(#fefefe,#e0e0e0);"></div>
<div class="b" style="left:611px;top:88px;width:1192px;height:38px;background:#fff;border:2px solid #dadada;"></div>
<div class="t" style="left:623px;top:102.00px;font-size:11px;color:#6d6d6d;font-weight:400;">[ 13:15:41 ] You do not use enhanced display functions</div>
<div class="t" style="left:1607.5px;top:92.00px;font-size:15.4px;color:#7b1a1a;font-weight:400;">for non-commercial use only</div>
<svg style="left:0;top:0" width="1807" height="934" viewBox="0 0 1807 934"><polygon points="742.00,496.00 1207.00,764.00 1207.00,770.50 742.00,502.50" fill="#87cdfe" stroke="none" stroke-width="0"/><polygon points="1207.00,764.00 1672.00,496.00 1672.00,502.50 1207.00,770.50" fill="#6592c6" stroke="none" stroke-width="0"/><polygon points="1207.00,228.00 1672.00,496.00 1207.00,764.00 742.00,496.00" fill="#87cdfe" stroke="none" stroke-width="0"/><line x1="1090.75" y1="295.00" x2="1555.75" y2="563.00" stroke="#000" stroke-width="1"/><line x1="974.50" y1="362.00" x2="1439.50" y2="630.00" stroke="#000" stroke-width="1"/><line x1="858.25" y1="429.00" x2="1323.25" y2="697.00" stroke="#000" stroke-width="1"/><line x1="1323.25" y1="295.00" x2="858.25" y2="563.00" stroke="#000" stroke-width="1"/><line x1="1439.50" y1="362.00" x2="974.50" y2="630.00" stroke="#000" stroke-width="1"/><line x1="1555.75" y1="429.00" x2="1090.75" y2="697.00" stroke="#000" stroke-width="1"/><line x1="858.50" y1="429.00" x2="858.50" y2="563.00" stroke="#000" stroke-width="1"/><line x1="974.50" y1="362.00" x2="974.50" y2="630.00" stroke="#000" stroke-width="1"/><line x1="1090.50" y1="295.00" x2="1090.50" y2="697.00" stroke="#000" stroke-width="1"/><line x1="1207.50" y1="228.00" x2="1207.50" y2="764.00" stroke="#000" stroke-width="1"/><line x1="1323.50" y1="295.00" x2="1323.50" y2="697.00" stroke="#000" stroke-width="1"/><line x1="1439.50" y1="362.00" x2="1439.50" y2="630.00" stroke="#000" stroke-width="1"/><line x1="1555.50" y1="429.00" x2="1555.50" y2="563.00" stroke="#000" stroke-width="1"/><line x1="1672.50" y1="496.00" x2="1672.50" y2="502.50" stroke="#000" stroke-width="1"/><line x1="742.50" y1="496.00" x2="742.50" y2="502.50" stroke="#000" stroke-width="1"/><line x1="1555.50" y1="563.00" x2="1555.50" y2="569.50" stroke="#000" stroke-width="1"/><line x1="858.50" y1="563.00" x2="858.50" y2="569.50" stroke="#000" stroke-width="1"/><line x1="1439.50" y1="630.00" x2="1439.50" y2="636.50" stroke="#000" stroke-width="1"/><line x1="974.50" y1="630.00" x2="974.50" y2="636.50" stroke="#000" stroke-width="1"/><line x1="1323.50" y1="697.00" x2="1323.50" y2="703.50" stroke="#000" stroke-width="1"/><line x1="1090.50" y1="697.00" x2="1090.50" y2="703.50" stroke="#000" stroke-width="1"/><line x1="1207.50" y1="764.00" x2="1207.50" y2="770.50" stroke="#000" stroke-width="1"/><line x1="1207.50" y1="764.00" x2="1207.50" y2="770.50" stroke="#000" stroke-width="1"/><line x1="742.00" y1="502.50" x2="858.25" y2="563.00" stroke="#000" stroke-width="0.9"/><line x1="1672.00" y1="502.50" x2="1555.75" y2="563.00" stroke="#000" stroke-width="0.9"/><line x1="858.25" y1="569.50" x2="974.50" y2="630.00" stroke="#000" stroke-width="0.9"/><line x1="1555.75" y1="569.50" x2="1439.50" y2="630.00" stroke="#000" stroke-width="0.9"/><line x1="974.50" y1="636.50" x2="1090.75" y2="697.00" stroke="#000" stroke-width="0.9"/><line x1="1439.50" y1="636.50" x2="1323.25" y2="697.00" stroke="#000" stroke-width="0.9"/><line x1="1090.75" y1="703.50" x2="1207.00" y2="764.00" stroke="#000" stroke-width="0.9"/><line x1="1323.25" y1="703.50" x2="1207.00" y2="764.00" stroke="#000" stroke-width="0.9"/><polygon points="1207.00,228.00 1672.00,496.00 1207.00,764.00 742.00,496.00" fill="none" stroke="#000" stroke-width="1.8" stroke-linejoin="round"/><polyline points="742.00,496.00 742.00,502.50 1207.00,770.50 1672.00,502.50 1672.00,496.00" fill="none" stroke="#000" stroke-width="1.8" stroke-linejoin="round"/><line x1="1207.00" y1="764.00" x2="1207.00" y2="770.50" stroke="#000" stroke-width="1.8"/><polygon points="974.50,489.50 1090.75,556.50 1090.75,563.00 974.50,496.00" fill="#87cdfe" stroke="none" stroke-width="0"/><polygon points="1090.75,556.50 1207.00,489.50 1207.00,496.00 1090.75,563.00" fill="#6592c6" stroke="none" stroke-width="0"/><polygon points="1090.75,422.50 1207.00,489.50 1090.75,556.50 974.50,489.50" fill="#87cdfe" stroke="none" stroke-width="0"/><line x1="974.50" y1="492.43" x2="1090.75" y2="559.75" stroke="#000" stroke-width="0.8"/><line x1="974.50" y1="494.38" x2="1090.75" y2="561.05" stroke="#000" stroke-width="0.8"/><line x1="1090.75" y1="563.00" x2="1207.00" y2="489.50" stroke="#000" stroke-width="0.8"/><line x1="1090.50" y1="422.50" x2="1090.50" y2="556.50" stroke="#000" stroke-width="1"/><line x1="1090.00" y1="556.50" x2="1090.00" y2="563.00" stroke="#000" stroke-width="1.6"/><polygon points="1090.75,422.50 1207.00,489.50 1090.75,556.50 974.50,489.50" fill="none" stroke="#000" stroke-width="1.8" stroke-linejoin="round"/><polyline points="974.50,489.50 974.50,496.00 1090.75,563.00 1207.00,496.00 1207.00,489.50" fill="none" stroke="#000" stroke-width="1.8" stroke-linejoin="round"/><polygon points="1207.00,482.50 1323.25,549.50 1323.25,563.00 1207.00,496.00" fill="#87cdfe" stroke="none" stroke-width="0"/><polygon points="1323.25,549.50 1439.50,482.50 1439.50,496.00 1323.25,563.00" fill="#6592c6" stroke="none" stroke-width="0"/><polygon points="1323.25,415.50 1439.50,482.50 1323.25,549.50 1207.00,482.50" fill="#87cdfe" stroke="none" stroke-width="0"/><line x1="1207.00" y1="488.57" x2="1323.25" y2="556.25" stroke="#000" stroke-width="0.8"/><line x1="1207.00" y1="492.62" x2="1323.25" y2="558.95" stroke="#000" stroke-width="0.8"/><line x1="1323.25" y1="563.00" x2="1439.50" y2="482.50" stroke="#000" stroke-width="0.8"/><line x1="1323.50" y1="415.50" x2="1323.50" y2="549.50" stroke="#000" stroke-width="1"/><line x1="1323.00" y1="549.50" x2="1323.00" y2="563.00" stroke="#000" stroke-width="1.6"/><polygon points="1323.25,415.50 1439.50,482.50 1323.25,549.50 1207.00,482.50" fill="none" stroke="#000" stroke-width="1.8" stroke-linejoin="round"/><polyline points="1207.00,482.50 1207.00,496.00 1323.25,563.00 1439.50,496.00 1439.50,482.50" fill="none" stroke="#000" stroke-width="1.8" stroke-linejoin="round"/><rect x="1206" y="490" width="2" height="6" fill="#ffff00"/></svg>
<div class="b" style="left:608px;top:897px;width:1198px;height:9px;background:#ececec;"></div>
<div class="b" style="left:611px;top:838px;width:1192px;height:60px;background:#f5f5f5;border:2px solid #dadada;"></div>
<svg style="left:0;top:0" width="1807" height="934" viewBox="0 0 1807 934"><rect x="629.50" y="840" width="2" height="18" fill="#4a78b4"/><rect x="645.95" y="840" width="2" height="9" fill="#9cb7db"/><rect x="662.40" y="840" width="2" height="9" fill="#9cb7db"/><rect x="678.85" y="840" width="2" height="9" fill="#9cb7db"/><rect x="695.30" y="840" width="2" height="9" fill="#9cb7db"/><rect x="711.75" y="840" width="2" height="18" fill="#4a78b4"/><rect x="728.20" y="840" width="2" height="9" fill="#9cb7db"/><rect x="744.65" y="840" width="2" height="9" fill="#9cb7db"/><rect x="761.10" y="840" width="2" height="9" fill="#9cb7db"/><rect x="777.55" y="840" width="2" height="9" fill="#9cb7db"/><rect x="794.00" y="840" width="2" height="18" fill="#4a78b4"/><rect x="810.45" y="840" width="2" height="9" fill="#9cb7db"/><rect x="826.90" y="840" width="2" height="9" fill="#9cb7db"/><rect x="843.35" y="840" width="2" height="9" fill="#9cb7db"/><rect x="859.80" y="840" width="2" height="9" fill="#9cb7db"/><rect x="876.25" y="840" width="2" height="18" fill="#4a78b4"/><rect x="892.70" y="840" width="2" height="9" fill="#9cb7db"/><rect x="909.15" y="840" width="2" height="9" fill="#9cb7db"/><rect x="925.60" y="840" width="2" height="9" fill="#9cb7db"/><rect x="942.05" y="840" width="2" height="9" fill="#9cb7db"/><rect x="958.50" y="840" width="2" height="18" fill="#4a78b4"/><rect x="974.95" y="840" width="2" height="9" fill="#9cb7db"/><rect x="991.40" y="840" width="2" height="9" fill="#9cb7db"/><rect x="1007.85" y="840" width="2" height="9" fill="#9cb7db"/><rect x="1024.30" y="840" width="2" height="9" fill="#9cb7db"/><rect x="1040.75" y="840" width="2" height="18" fill="#4a78b4"/><rect x="1057.20" y="840" width="2" height="9" fill="#9cb7db"/><rect x="1073.65" y="840" width="2" height="9" fill="#9cb7db"/><rect x="1090.10" y="840" width="2" height="9" fill="#9cb7db"/><rect x="1106.55" y="840" width="2" height="9" fill="#9cb7db"/><rect x="1123.00" y="840" width="2" height="18" fill="#4a78b4"/><rect x="1139.45" y="840" width="2" height="9" fill="#9cb7db"/><rect x="1155.90" y="840" width="2" height="9" fill="#9cb7db"/><rect x="1172.35" y="840" width="2" height="9" fill="#9cb7db"/><rect x="1188.80" y="840" width="2" height="9" fill="#9cb7db"/><rect x="1205.25" y="840" width="2" height="18" fill="#4a78b4"/><rect x="1221.70" y="840" width="2" height="9" fill="#9cb7db"/><rect x="1238.15" y="840" width="2" height="9" fill="#9cb7db"/><rect x="1254.60" y="840" width="2" height="9" fill="#9cb7db"/><rect x="1271.05" y="840" width="2" height="9" fill="#9cb7db"/><rect x="1287.50" y="840" width="2" height="18" fill="#4a78b4"/><rect x="1303.95" y="840" width="2" height="9" fill="#9cb7db"/><rect x="1320.40" y="840" width="2" height="9" fill="#9cb7db"/><rect x="1336.85" y="840" width="2" height="9" fill="#9cb7db"/><rect x="1353.30" y="840" width="2" height="9" fill="#9cb7db"/><rect x="1369.75" y="840" width="2" height="18" fill="#4a78b4"/><rect x="1386.20" y="840" width="2" height="9" fill="#9cb7db"/><rect x="1402.65" y="840" width="2" height="9" fill="#9cb7db"/><rect x="1419.10" y="840" width="2" height="9" fill="#9cb7db"/><rect x="1435.55" y="840" width="2" height="9" fill="#9cb7db"/><rect x="1452.00" y="840" width="2" height="18" fill="#4a78b4"/><rect x="1468.45" y="840" width="2" height="9" fill="#9cb7db"/><rect x="1484.90" y="840" width="2" height="9" fill="#9cb7db"/><rect x="1501.35" y="840" width="2" height="9" fill="#9cb7db"/><rect x="1517.80" y="840" width="2" height="9" fill="#9cb7db"/><rect x="1534.25" y="840" width="2" height="18" fill="#4a78b4"/><rect x="1550.70" y="840" width="2" height="9" fill="#9cb7db"/><rect x="1567.15" y="840" width="2" height="9" fill="#9cb7db"/><rect x="1583.60" y="840" width="2" height="9" fill="#9cb7db"/><rect x="1600.05" y="840" width="2" height="9" fill="#9cb7db"/><rect x="1616.50" y="840" width="2" height="18" fill="#4a78b4"/><rect x="1632.95" y="840" width="2" height="9" fill="#9cb7db"/><rect x="1649.40" y="840" width="2" height="9" fill="#9cb7db"/><rect x="1665.85" y="840" width="2" height="9" fill="#9cb7db"/><rect x="1682.30" y="840" width="2" height="9" fill="#9cb7db"/><rect x="1698.75" y="840" width="2" height="18" fill="#4a78b4"/><rect x="1715.20" y="840" width="2" height="9" fill="#9cb7db"/><rect x="1731.65" y="840" width="2" height="9" fill="#9cb7db"/><rect x="1748.10" y="840" width="2" height="9" fill="#9cb7db"/><rect x="1764.55" y="840" width="2" height="9" fill="#9cb7db"/></svg>
<div class="t" style="left:628.4px;top:861.00px;font-size:10px;color:#606060;font-weight:400;">0 µm</div>
<div class="t" style="left:707.5px;top:861.00px;font-size:10px;color:#606060;font-weight:400;">50</div>
<div class="t" style="left:787.0px;top:861.00px;font-size:10px;color:#606060;font-weight:400;">100</div>
<div class="t" style="left:869.2px;top:861.00px;font-size:10px;color:#606060;font-weight:400;">150</div>
<div class="t" style="left:951.5px;top:861.00px;font-size:10px;color:#606060;font-weight:400;">200</div>
<div class="t" style="left:1033.7px;top:861.00px;font-size:10px;color:#606060;font-weight:400;">250</div>
<div class="t" style="left:1116.0px;top:861.00px;font-size:10px;color:#606060;font-weight:400;">300</div>
<div class="t" style="left:1198.2px;top:861.00px;font-size:10px;color:#606060;font-weight:400;">350</div>
<div class="t" style="left:1280.5px;top:861.00px;font-size:10px;color:#606060;font-weight:400;">400</div>
<div class="t" style="left:1362.7px;top:861.00px;font-size:10px;color:#606060;font-weight:400;">450</div>
<div class="t" style="left:1445.0px;top:861.00px;font-size:10px;color:#606060;font-weight:400;">500</div>
<div class="t" style="left:1527.2px;top:861.00px;font-size:10px;color:#606060;font-weight:400;">550</div>
<div class="t" style="left:1609.5px;top:861.00px;font-size:10px;color:#606060;font-weight:400;">600</div>
<div class="t" style="left:1691.7px;top:861.00px;font-size:10px;color:#606060;font-weight:400;">650</div>
<svg style="left:0;top:0" width="1807" height="934" viewBox="0 0 1807 934">
<path d="M651 808.7 C655 804 662 802 670 801.8 C678 802 685 804 688.5 808.7 L683 813 L671 820 L669 820 L657 812 Z" fill="#1aa040"/>
<path d="M657 809.3 C659 806 663 804.6 668 804.5 L669 819 L657 811.2 Z" fill="#1e90ff"/>
<path d="M672.5 804.6 C677 805 681 806.5 683 810 L673 818 Z" fill="#a04a00"/>
<path d="M683 810 L688.5 808.7 L684 813.5 L676 818 Z" fill="#0a7a30"/>
<rect x="667.3" y="805" width="2.2" height="14" fill="#1050a0"/>
<rect x="670" y="804.5" width="2.6" height="14.5" fill="#ff7f00"/>
<line x1="670.3" y1="784.5" x2="670.3" y2="804" stroke="#1a9a3a" stroke-width="2"/>
<line x1="641.8" y1="800.6" x2="657" y2="810" stroke="#ff7f00" stroke-width="1.6"/>
<line x1="698.4" y1="800.6" x2="683" y2="809.3" stroke="#1f78e0" stroke-width="1.6"/>
</svg>
<div class="t" style="left:666.5px;top:774.00px;font-size:10px;color:#444;font-weight:400;">z</div>
<div class="t" style="left:631.2px;top:794.00px;font-size:10px;color:#444;font-weight:400;">y</div>
<div class="t" style="left:701.8px;top:794.00px;font-size:10px;color:#444;font-weight:400;">x</div>
<div class="b" style="left:608px;top:906px;width:1198px;height:1px;background:#dcdcdc;"></div>
<div class="b" style="left:707px;top:908px;width:1px;height:20px;background:#dcdcdc;"></div>
<div class="b" style="left:907px;top:908px;width:1px;height:20px;background:#dcdcdc;"></div>
<div class="t" style="left:610px;top:914.00px;font-size:11px;color:#000;font-weight:400;letter-spacing:-0.15px;">450x420x400</div>
<div class="t" style="left:712.2px;top:913.00px;font-size:12px;color:#000;font-weight:400;letter-spacing:-0.3px;">Select Triangles</div>
<div class="t" style="left:912.4px;top:913.00px;font-size:12px;color:#000;font-weight:400;">Press Shift to add / remove triangles to /from the current selection</div>
<div class="b" style="left:1400px;top:909px;width:397px;height:16px;background:#e6e6e6;border:1px solid #bcbcbc;"></div>
<svg style="left:0;top:0" width="1807" height="934" viewBox="0 0 1807 934"><g><path d="M414.6 598.4 L282.3 531" stroke="#000" stroke-opacity="0.18" stroke-width="6" style="filter:blur(2px)"/><polygon points="282.3,531 298.1,531 291.5,543.4" fill="#000" fill-opacity="0.18" style="filter:blur(2px)"/><line x1="412.6" y1="595.4" x2="292.8" y2="534.2" stroke="#c0121c" stroke-width="3"/><polygon points="280.3,528 296.1,528 289.5,540.4" fill="#c0121c"/></g><g><path d="M1257.5 600.8 L1212.5 514.2" stroke="#000" stroke-opacity="0.18" stroke-width="6" style="filter:blur(2px)"/><polygon points="1212.5,514.2 1226,523.2 1212.5,530.2" fill="#000" fill-opacity="0.18" style="filter:blur(2px)"/><line x1="1255.5" y1="597.8" x2="1217.25" y2="523.7" stroke="#c0121c" stroke-width="3"/><polygon points="1210.5,511.2 1224,520.2 1210.5,527.2" fill="#c0121c"/></g></svg>
</body></html>
